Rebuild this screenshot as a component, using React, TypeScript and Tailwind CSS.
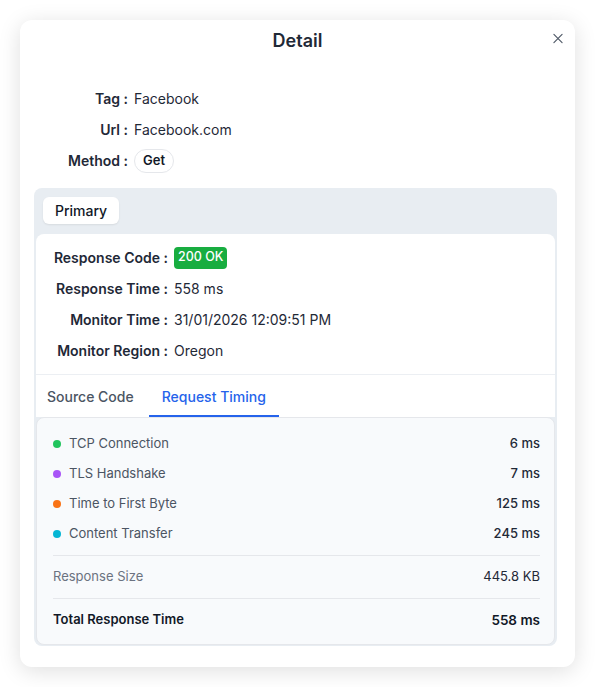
import React from "react";

const font = { fontFamily: "Inter, 'Noto Sans', sans-serif" };

function InfoRow({ label, children, w }: { label: string; children: React.ReactNode; w: string }) {
  return (
    <div className="flex h-[31px] items-center">
      <div className={`${w} shrink-0 text-right text-[14px] font-semibold text-[#1f2937]`}>{label} :</div>
      <div className="ml-[6px] flex items-center text-[14px] text-[#1f2937]">{children}</div>
    </div>
  );
}

function TimingRow({ color, label, value }: { color: string; label: string; value: string }) {
  return (
    <div className="flex h-[30px] items-center justify-between">
      <div className="flex items-center">
        <span className={`h-[8px] w-[8px] rounded-full ${color}`} />
        <span className="ml-[8px] text-[13px] text-[#4b5563]">{label}</span>
      </div>
      <span className="text-[13px] font-medium text-[#1f2937]">{value}</span>
    </div>
  );
}

export default function App() {
  return (
    <div className="min-h-[687px] bg-white pt-[20px]" style={font}>
      <div className="relative mx-[20px] h-[647px] w-[555px] rounded-xl bg-white shadow-[0_4px_22px_rgba(0,0,0,0.13)]">
        <div className="pt-[10px] text-center text-[18px] font-semibold leading-[22px] text-[#1f2937]">Detail</div>
        <button className="absolute right-[12px] top-[13px] flex h-[10px] w-[10px] items-center justify-center text-[#4b5563]">
          <svg width="11" height="11" viewBox="0 0 11 11" fill="none" stroke="currentColor" strokeWidth="1.2" strokeLinecap="round">
            <path d="M1 1L10 10M10 1L1 10" />
          </svg>
        </button>

        <div className="mt-[31px]">
          <InfoRow label="Tag" w="w-[108px]">Facebook</InfoRow>
          <InfoRow label="Url" w="w-[108px]">Facebook.com</InfoRow>
          <InfoRow label="Method" w="w-[108px]">
            <span className="flex h-[24px] items-center rounded-full border border-[#e5e7eb] px-[8px] text-[13px] font-semibold text-[#111827]">
              Get
            </span>
          </InfoRow>
        </div>

        <div className="ml-[14px] mr-[18px] mt-[12px] rounded-lg bg-[#e8edf2] px-[2px] pb-[1px]">
          <div className="pb-[10px] pl-[7px] pt-[9px]">
            <div className="flex h-[27px] w-[76px] items-center justify-center rounded-md bg-white text-[14px] font-medium text-[#111827] shadow-[0_1px_2px_rgba(0,0,0,0.08)]">
              Primary
            </div>
          </div>
          <div className="rounded-t-lg bg-white pb-[8px] pt-[8px]">
            <InfoRow label="Response Code" w="w-[132px]">
              <span className="flex h-[22px] items-center rounded-[4px] bg-[#18ad40] px-[4px] text-[12.5px] font-medium text-white">
                200 OK
              </span>
            </InfoRow>
            <InfoRow label="Response Time" w="w-[132px]">558 ms</InfoRow>
            <InfoRow label="Monitor Time" w="w-[132px]">31/01/2026 12:09:51 PM</InfoRow>
            <InfoRow label="Monitor Region" w="w-[132px]">Oregon</InfoRow>
          </div>
          <div className="flex h-[43px] border-t border-[#eceff3] bg-white">
            <div className="flex items-center pl-[11px] pr-[13px] text-[14px] font-medium text-[#4b5563]">Source Code</div>
            <div className="ml-[2px] flex items-center border-b-2 border-[#2563eb] px-[13px] pt-[2px] text-[14px] font-medium text-[#2563eb]">
              Request Timing
            </div>
          </div>
          <div className="rounded-lg border border-[#e5e7eb] bg-[#f8fafc] pb-[9px] pl-[16px] pr-[14px] pt-[11px]">
            <TimingRow color="bg-[#22c55e]" label="TCP Connection" value="6 ms" />
            <TimingRow color="bg-[#a855f7]" label="TLS Handshake" value="7 ms" />
            <TimingRow color="bg-[#f97316]" label="Time to First Byte" value="125 ms" />
            <TimingRow color="bg-[#06b6d4]" label="Content Transfer" value="245 ms" />
            <div className="mt-[6px] h-[1px] bg-[#e5e7eb]" />
            <div className="mt-[6px] flex h-[30px] items-center justify-between">
              <span className="text-[13px] text-[#6b7280]">Response Size</span>
              <span className="text-[13px] text-[#1f2937]">445.8 KB</span>
            </div>
            <div className="mt-[6px] h-[1px] bg-[#e5e7eb]" />
            <div className="mt-[6px] flex h-[30px] items-center justify-between">
              <span className="text-[13px] font-semibold text-[#111827]">Total Response Time</span>
              <span className="text-[13.5px] font-semibold text-[#111827]">558 ms</span>
            </div>
          </div>
        </div>
      </div>
    </div>
  );
}
